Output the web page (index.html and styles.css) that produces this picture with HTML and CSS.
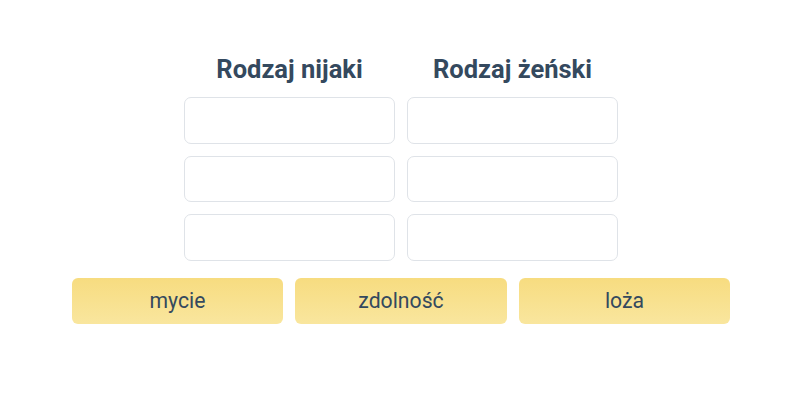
FILE: index.html
```html
<!DOCTYPE html>
<html lang="pl">
<head>
<meta charset="utf-8">
<link rel="stylesheet" href="styles.css">
</head>
<body>
<div class="page">
  <div class="board">
    <div class="column">
      <h2 class="title">Rodzaj nijaki</h2>
      <div class="slot"></div>
      <div class="slot"></div>
      <div class="slot"></div>
    </div>
    <div class="column">
      <h2 class="title">Rodzaj żeński</h2>
      <div class="slot"></div>
      <div class="slot"></div>
      <div class="slot"></div>
    </div>
  </div>
  <div class="words">
    <div class="word">mycie</div>
    <div class="word">zdolność</div>
    <div class="word">loża</div>
  </div>
</div>
</body>
</html>
```
FILE: styles.css
```css
html, body {
  margin: 0;
  padding: 0;
  background: #ffffff;
}
body {
  font-family: Roboto, "Liberation Sans", sans-serif;
  color: #34495e;
}
.page {
  width: 800px;
  padding-left: 2px;
  box-sizing: border-box;
  display: flex;
  flex-direction: column;
  align-items: center;
  padding-top: 50px;
}
.board {
  display: flex;
  gap: 12px;
}
.column {
  width: 211px;
  display: flex;
  flex-direction: column;
  gap: 12px;
}
.title {
  margin: 1px 0 -2px 0;
  font-size: 25.5px;
  font-weight: 700;
  line-height: 36px;
  text-align: center;
  color: #34495e;
  white-space: nowrap;
}
.slot {
  height: 44.5px;
  border: 1px solid #dfe3e8;
  border-radius: 7px;
  background: #fff;
}
.words {
  display: flex;
  gap: 12px;
  margin-top: 17px;
}
.word {
  width: 211.5px;
  height: 46px;
  border-radius: 6px;
  background: linear-gradient(#f7dc80, #f9e69e);
  display: flex;
  align-items: center;
  justify-content: center;
  font-size: 21.2px;
  color: #34495e;
}
```
